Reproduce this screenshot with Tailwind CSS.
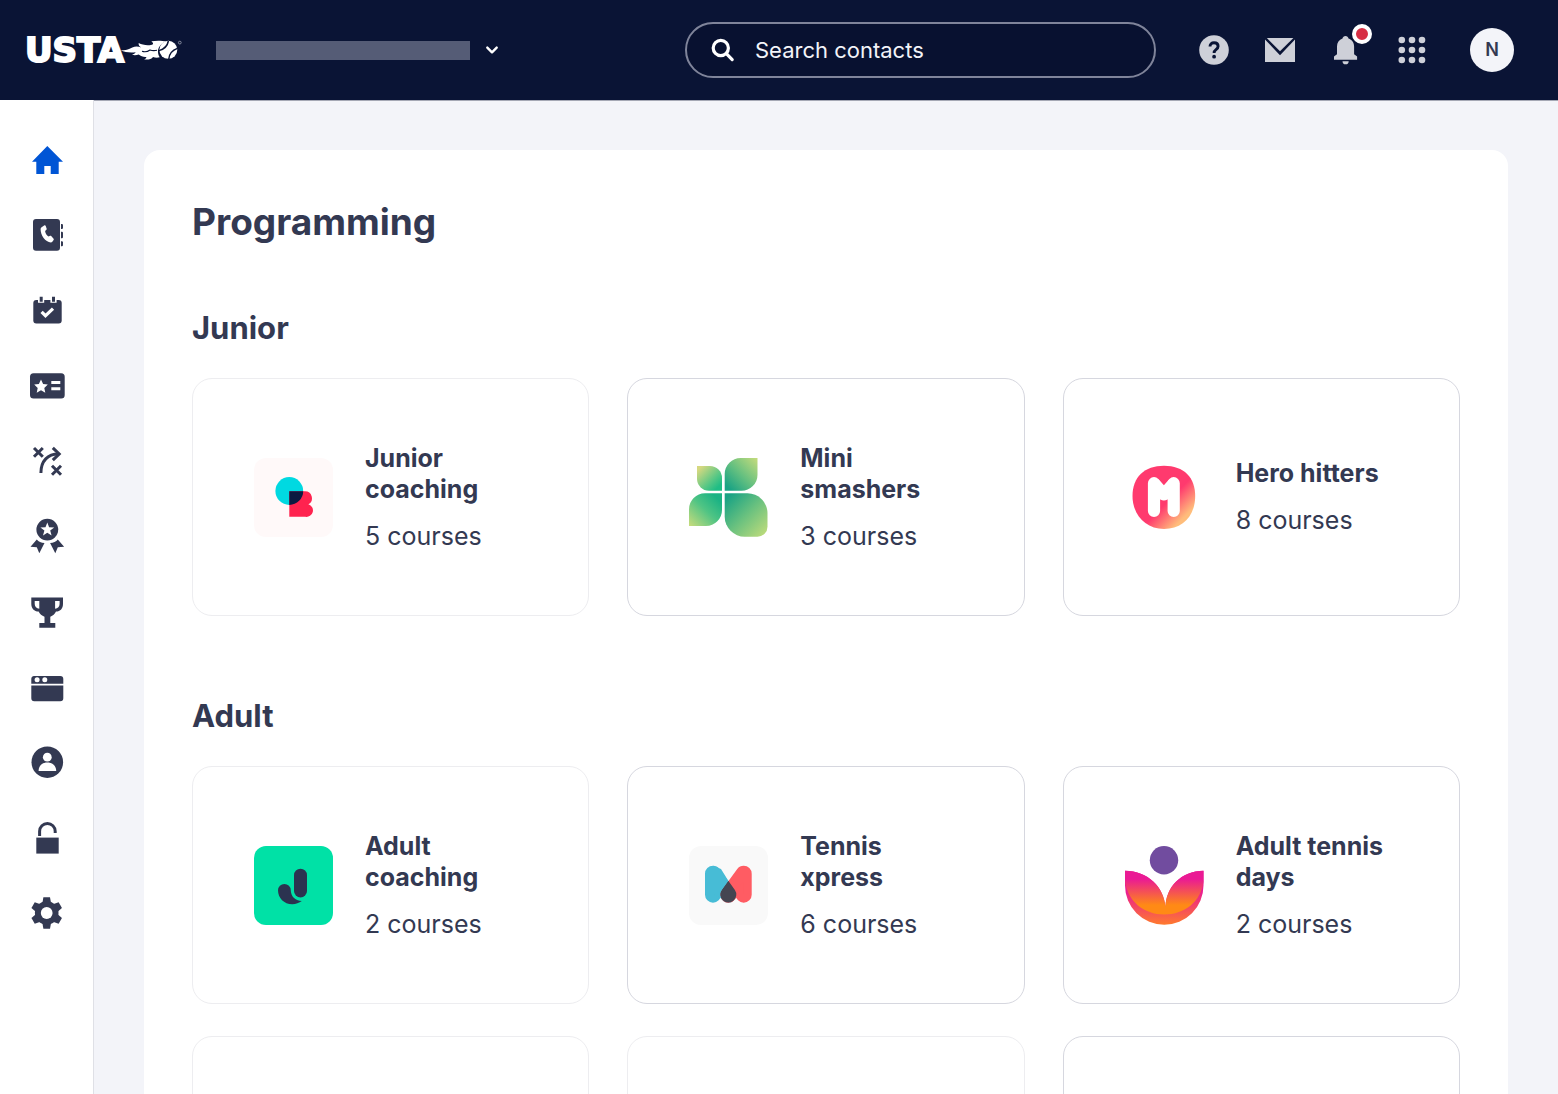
<!DOCTYPE html>
<html lang="en">
  <head>
    <meta charset="UTF-8" />
    <meta name="viewport" content="width=device-width, initial-scale=1.0" />
    <title>Programming</title>
    <script src="https://cdn.jsdelivr.net/npm/@tailwindcss/browser@4"></script>
  </head>
  <body class="flex h-screen flex-col overflow-hidden bg-[#f3f4f9] font-['Inter',sans-serif] text-[#333952]">
    <header class="flex h-[100px] shrink-0 items-center bg-[#0a1435] pr-11 pl-[25px]">
      <a href="#" aria-label="USTA home" class="flex items-center text-white">
        <span class="font-['DejaVu_Sans',sans-serif] text-[34px] leading-10 font-bold [-webkit-text-stroke:2px_white]">USTA</span>
        <svg class="-ml-1 h-[30px] w-[62px]" viewBox="0 0 62 30" fill="currentColor">
          <path d="M.7 15.600C5 15.400 9 14.500 12.300 12.600c3-1.400 6-1.200 9 0-2.200-1.500-3-2.800-2.600-4.600C22 9.800 26 10.600 31 10c2.500-.3 3-1.500.3-3.700C36 5.300 42 5.500 46 6.400 41.500 8 38.500 11.500 38 15.500c-.2 2.500.4 4.800 1.700 6.700-2 .7-4.500.6-6.700-.2-1.500 2.300-5.500 3-9 2.300 1.500-.5 2.300-1.300 2.400-2.400-3 .3-5.500-.6-7.700-2.400-2 .8-4.500 1-6.700.3 1.800-.5 3-1.300 3.700-2.500C10.500 18 5 17.400.7 15.600Z" />
          <path d="M22 16.300c3 1 5.500.6 8-1.300 2 .7 4.500.8 7 .3" fill="none" stroke="#0a1435" stroke-width="1.100" />
          <circle cx="48.300" cy="14.800" r="9" />
          <path d="M39 15.600c5-1.400 8.500-4.800 9.400-9.600M48.800 24c.4-4.800 3.600-8.800 8.600-10.600" fill="none" stroke="#0a1435" stroke-width="1.500" />
          <circle cx="59.800" cy="7.600" r="1.400" fill="none" stroke="#9da1b3" stroke-width=".8" />
        </svg>
      </a>
      <button type="button" aria-label="Switch organisation" class="ml-[34px] flex items-center gap-[15px] text-white">
        <span class="h-[19px] w-[254px] bg-[#555c76]"></span>
        <svg class="size-[14px]" viewBox="0 0 14 14" fill="none" stroke="currentColor" stroke-width="2.400" stroke-linecap="round" stroke-linejoin="round">
          <path d="M2.300 4.600 7 9.300l4.700-4.700" />
        </svg>
      </button>

      <label class="ml-auto flex h-14 w-[471px] items-center gap-5 rounded-full border-2 border-[#7f849a] bg-[#081130] px-6">
        <svg class="size-6 shrink-0 text-white" viewBox="0 0 24 24" fill="none" stroke="currentColor" stroke-width="3.200" stroke-linecap="round">
          <circle cx="9.800" cy="10" r="7.600" />
          <path d="m15.600 15.800 5.600 5.800" />
        </svg>
        <input type="text" aria-label="Search contacts" placeholder="Search contacts" class="min-w-0 flex-1 bg-transparent text-[22px] text-white outline-none placeholder:text-[#f3f4f9]" />
      </label>

      <div class="ml-[43px] flex items-center gap-9 text-[#ced0d8]">
        <button type="button" aria-label="Help" class="size-[30px]">
          <svg class="size-[30px]" viewBox="0 0 30 30">
            <circle cx="15" cy="15" r="14.800" fill="currentColor" />
            <path d="M11 11.600c0-2.400 1.700-3.900 4-3.900 2.400 0 4.100 1.400 4.100 3.600 0 1.600-.9 2.500-2.100 3.400-1.300 1-1.900 1.600-1.900 3.300" fill="none" stroke="#0a1435" stroke-width="2.900" />
            <circle cx="15.100" cy="21.700" r="1.900" fill="#0a1435" />
          </svg>
        </button>
        <button type="button" aria-label="Messages" class="size-[30px]">
          <svg class="size-[30px]" viewBox="0 0 30 30" fill="currentColor">
            <path d="M1.800 3h26.600L15 16.200Z" />
            <path d="M0 4.500 15 20.300 30 4.500V27H0Z" />
          </svg>
        </button>
        <button type="button" aria-label="Notifications" class="relative size-[30px]">
          <svg class="size-[30px]" viewBox="0 0 30 30" fill="currentColor">
            <path d="M14.500 1c1.600 0 2.700 1 3 2.500 3.500 1.200 5.600 4.200 5.600 8v7.700l3 2.300v3.200H3v-3.200l3-2.300v-7.700c0-3.800 2-6.800 5.500-8C11.800 2 12.900 1 14.500 1Z" />
            <path d="M11.500 26.200h6.200a3.100 3.100 0 0 1-6.200 0Z" />
          </svg>
          <span class="absolute -top-[11px] left-[21px] size-5 rounded-full border-4 border-white bg-[#d72e43]"></span>
        </button>
        <button type="button" aria-label="Apps" class="size-[30px]">
          <svg class="size-[30px]" viewBox="0 0 30 30" fill="currentColor">
            <circle cx="4.800" cy="5" r="3.300" /><circle cx="15" cy="5" r="3.300" /><circle cx="25" cy="5" r="3.300" />
            <circle cx="4.800" cy="15" r="3.300" /><circle cx="15" cy="15" r="3.300" /><circle cx="25" cy="15" r="3.300" />
            <circle cx="4.800" cy="25" r="3.300" /><circle cx="15" cy="25" r="3.300" /><circle cx="25" cy="25" r="3.300" />
          </svg>
        </button>
      </div>
      <button type="button" aria-label="Account" class="ml-[43px] size-11 rounded-full bg-[#f3f4f9] text-lg font-semibold text-[#333952]">N</button>
    </header>

    <div class="flex min-h-0 flex-1">
      <nav aria-label="Main" class="w-[94px] shrink-0 border-r border-[#dfe0e6] bg-white pt-[42px]">
        <ul class="flex h-[789px] flex-col items-center justify-between">
          <li>
            <a href="#" aria-label="Home" aria-current="page" class="block text-[#0055d5]">
              <svg class="size-9" viewBox="0 0 36 36" fill="currentColor">
                <path d="M18.300 4 34 19.700h-4.300V32h-8v-8h-6.400v8h-8V19.700H3Z" />
              </svg>
            </a>
          </li>
          <li>
            <a href="#" aria-label="Contacts" class="block">
              <svg class="size-9" viewBox="0 0 36 36" fill="currentColor">
                <rect x="4" y="2" width="27" height="31.700" rx="3" />
                <path d="M32 7h1.200l.8.8v3.400l-.8.800H32ZM32 14.700h1.200l.8.8v5l-.8.800H32ZM32 24.200h1.200l.8.8v3.500l-.8.800H32Z" />
                <path d="m12.600 10.200 2.900-1.900c.5-.3.900-.1 1.100.4l1.100 3.100c.1.400 0 .7-.3 1l-1.300 1.100c.3 2.300 1.500 4.200 3.400 5.600l1.700-.7c.4-.1.700 0 1 .3l2.400 2.700c.3.400.3.800 0 1.200l-1.500 2c-.3.300-.7.500-1.200.5-5.600-.2-10.400-7.200-10.300-13.400 0-.8.400-1.500 1-1.900Z" fill="#fff" />
              </svg>
            </a>
          </li>
          <li>
            <a href="#" aria-label="Bookings" class="block">
              <svg class="size-9" viewBox="0 0 36 36" fill="currentColor">
                <rect x="4.300" y="7" width="28.400" height="23.400" rx="3" />
                <path d="M9 6h6.200v3.800H9ZM21.400 6h6.200v3.800h-6.200Z" fill="#fff" />
                <path d="M10.700 3.700h3v5h-3ZM23 3.700h3v5h-3Z" />
                <path d="m12.600 18.800 3.900 3.900 7.500-7" fill="none" stroke="#fff" stroke-width="3.200" />
              </svg>
            </a>
          </li>
          <li>
            <a href="#" aria-label="Memberships" class="block">
              <svg class="size-9" viewBox="0 0 36 36" fill="currentColor">
                <rect x="1" y="5.300" width="34.700" height="25.200" rx="3.500" />
                <path d="m12 11.500 2.100 4.500 4.700.5-3.500 3.400 1 4.800-4.300-2.500-4.300 2.500 1-4.800-3.500-3.400 4.700-.5ZM22.300 13h9v3h-9ZM22.300 19.300h9v3h-9Z" fill="#fff" />
              </svg>
            </a>
          </li>
          <li>
            <a href="#" aria-label="Coaching" class="block">
              <svg class="size-9" viewBox="0 0 36 36" fill="none" stroke="currentColor" stroke-width="3">
                <path d="m5 5 8.800 8.800m0-8.800L5 13.800M23 22.800l9 9m0-9-9 9" />
                <path d="M11.900 30C11.900 17.600 19 11 29.500 11" />
                <path d="m23.800 4.800 6.400 6.200-6.400 6.200" />
              </svg>
            </a>
          </li>
          <li>
            <a href="#" aria-label="Rankings" class="block">
              <svg class="size-9" viewBox="0 0 36 36" fill="currentColor">
                <circle cx="18.300" cy="11.600" r="10.900" />
                <path d="m18.300 4.400 1.800 4.900 5.100.1-4 3.200 1.400 5-4.300-2.900-4.300 2.900 1.400-5-4-3.200 5.100-.1Z" fill="#fff" />
                <path d="M7.800 21.600c1.700 2.300 4.400 3.400 7.700 3.500L10.300 35.300l-2.500-6.100-6.300-.4ZM28.800 21.600c-1.700 2.300-4.400 3.400-7.700 3.500l5.200 10.200 2.500-6.100 6.300-.4Z" />
              </svg>
            </a>
          </li>
          <li>
            <a href="#" aria-label="Competitions" class="block">
              <svg class="size-9" viewBox="0 0 36 36" fill="currentColor">
                <path fill-rule="evenodd" d="M2.300 3.400H34V10c0 4.500-2.600 7.500-7 7.600-1.300 2.500-3 4.200-5.700 5.200v6.300h5v4.600h-16v-4.600h5.200v-6.300c-2.700-1-4.600-2.700-5.900-5.200C5.200 17.500 2.300 14.500 2.300 10ZM5.700 7V10c0 2.400 1.800 4.400 4.600 4.800V7ZM26.100 7v7.800c2.700-.4 4.500-2.400 4.500-4.800V7Z" />
              </svg>
            </a>
          </li>
          <li>
            <a href="#" aria-label="Website" class="block">
              <svg class="size-9" viewBox="0 0 36 36" fill="currentColor">
                <path d="M5 7h26.300a3 3 0 0 1 3 3v4.700h-32V10A3 3 0 0 1 5 7ZM2.300 16.400h32v12.800a3 3 0 0 1-3 3H5.300a3 3 0 0 1-3-3Z" />
                <circle cx="8.100" cy="10.800" r="2.500" fill="#fff" />
                <circle cx="15.800" cy="10.800" r="2.500" fill="#fff" />
              </svg>
            </a>
          </li>
          <li>
            <a href="#" aria-label="Profile" class="block">
              <svg class="size-9" viewBox="0 0 36 36" fill="currentColor">
                <circle cx="18.300" cy="18.200" r="15.800" />
                <circle cx="18.300" cy="13.200" r="4.400" fill="#fff" />
                <path d="M9.600 26.900c0-5.300 3.600-8.500 8.700-8.500s8.900 3.200 8.900 8.500Z" fill="#fff" />
              </svg>
            </a>
          </li>
          <li>
            <a href="#" aria-label="Access" class="block">
              <svg class="size-9" viewBox="0 0 36 36" fill="currentColor">
                <path d="M7.300 17.600h22.400v16H7.300Z" />
                <path d="M10.600 16v-4.700a7.800 7.800 0 0 1 15.600 0v1.600" fill="none" stroke="currentColor" stroke-width="3" />
              </svg>
            </a>
          </li>
          <li>
            <a href="#" aria-label="Settings" class="block">
              <svg class="size-9" viewBox="0 0 36 36" fill="currentColor">
                <path d="M14.400 2.300h6.600l1.200 6.700v18L21 33.700h-6.600L13.200 27V9Z" />
                <path d="M14.400 2.300h6.600l1.200 6.700v18L21 33.700h-6.600L13.200 27V9Z" transform="rotate(60 17.700 18)" />
                <path d="M14.400 2.300h6.600l1.200 6.700v18L21 33.700h-6.600L13.200 27V9Z" transform="rotate(120 17.700 18)" />
                <circle cx="17.700" cy="18" r="11.800" />
                <circle cx="17.700" cy="18" r="5.900" fill="#fff" />
              </svg>
            </a>
          </li>
        </ul>
      </nav>

      <main class="min-w-0 flex-1 overflow-y-auto border-t border-[#a5a8b5] px-[50px] pt-[49px] [scrollbar-width:none]">
        <div class="rounded-2xl bg-white p-12">
          <h1 class="text-[37px] leading-12 font-bold">Programming</h1>

          <section class="mt-[62px]">
            <h2 class="text-[31px] leading-10 font-bold">Junior</h2>
            <div class="mt-[30px] grid grid-cols-3 gap-x-[38px] gap-y-8">
              <a href="#" class="flex h-[238px] items-center gap-8 rounded-[20px] border border-[#ededf0] px-[61px]">
                <svg class="size-[79px] shrink-0" viewBox="0 0 79 79">
                  <defs>
                    <clipPath id="ball"><circle cx="35.300" cy="33" r="13.900" /></clipPath>
                  </defs>
                  <rect width="79" height="79" rx="12" fill="#fff9f9" />
                  <circle cx="35.300" cy="33" r="13.900" fill="#00d9e1" />
                  <path d="M35.300 33.300h15.500a6.900 6.900 0 0 1 3.600 12.900 6.500 6.500 0 0 1-3.100 12.600h-16Z" fill="#ff234f" />
                  <path d="M35.300 33.300h16v26h-16Z" fill="#0b1a41" clip-path="url(#ball)" />
                </svg>
                <div class="text-[25px] leading-[31px]">
                  <h3 class="font-bold">Junior coaching</h3>
                  <p class="mt-4">5 courses</p>
                </div>
              </a>
              <a href="#" class="flex h-[238px] items-center gap-8 rounded-[20px] border border-[#d6d7df] px-[61px]">
                <svg class="size-[79px] shrink-0" viewBox="0 0 79 79">
                  <defs>
                    <linearGradient id="leaf1" x1="0" y1="0" x2="1" y2="1"><stop offset=".1" stop-color="#d5d880" /><stop offset=".6" stop-color="#56c785" /><stop offset=".85" stop-color="#1fbd85" /></linearGradient>
                    <linearGradient id="leaf2" x1="1" y1="0" x2="0" y2="1"><stop offset="0" stop-color="#c6dc7c" /><stop offset=".5" stop-color="#65c080" /><stop offset=".9" stop-color="#1aa384" /></linearGradient>
                    <linearGradient id="leaf3" x1="0" y1="1" x2="1" y2="0"><stop offset="0" stop-color="#c9dc7c" /><stop offset=".5" stop-color="#4fc484" /><stop offset=".85" stop-color="#1bb384" /></linearGradient>
                    <linearGradient id="leaf4" x1="0" y1="0" x2="1" y2="1"><stop offset=".08" stop-color="#1aa384" /><stop offset=".5" stop-color="#69c17f" /><stop offset=".95" stop-color="#bcdb7b" /></linearGradient>
                  </defs>
                  <path d="M8 8h13a12 12 0 0 1 12 12v12.700H20a12 12 0 0 1-12-12Z" fill="url(#leaf1)" />
                  <path d="M68.500 0v16.700a16 16 0 0 1-16 16H35.700V16a16 16 0 0 1 16-16Z" fill="url(#leaf2)" />
                  <path d="M0 68V51.300a16 16 0 0 1 16-16h17V52a16 16 0 0 1-16 16Z" fill="url(#leaf3)" />
                  <path d="M35.700 35.300H58.500a20 20 0 0 1 20 20v13.400a10 10 0 0 1-10 10H55.700a20 20 0 0 1-20-20Z" fill="url(#leaf4)" />
                </svg>
                <div class="text-[25px] leading-[31px]">
                  <h3 class="font-bold">Mini smashers</h3>
                  <p class="mt-4">3 courses</p>
                </div>
              </a>
              <a href="#" class="flex h-[238px] items-center gap-8 rounded-[20px] border border-[#d6d7df] px-[61px]">
                <svg class="size-[79px] shrink-0" viewBox="0 0 79 79">
                  <defs>
                    <linearGradient id="hero" x1=".1" y1=".1" x2=".9" y2=".9"><stop offset=".58" stop-color="#ff3a6e" /><stop offset=".9" stop-color="#ffbd7b" /></linearGradient>
                  </defs>
                  <path d="M39 7.700C59 7.700 70.200 19.500 70.200 38 70.200 57.500 58 71 39 71 20 71 7.500 56 7.500 38 7.500 19 19.500 7.700 39 7.700Z" fill="url(#hero)" />
                  <path d="M29 25.200v27.700M48.700 25.200v27.700" stroke="#fff" stroke-width="12.200" stroke-linecap="round" />
                  <path d="m33.400 21 5.500 6.200 5.500-6.200L50 36l-7.500 5.500q-3.600 1.800-7.200 0L29 36Z" fill="#fff" />
                </svg>
                <div class="text-[25px] leading-[31px]">
                  <h3 class="font-bold">Hero hitters</h3>
                  <p class="mt-4">8 courses</p>
                </div>
              </a>
            </div>
          </section>

          <section class="mt-20">
            <h2 class="text-[31px] leading-10 font-bold">Adult</h2>
            <div class="mt-[30px] grid grid-cols-3 gap-x-[38px] gap-y-8">
              <a href="#" class="flex h-[238px] items-center gap-8 rounded-[20px] border border-[#ededf0] px-[61px]">
                <svg class="size-[79px] shrink-0" viewBox="0 0 79 79">
                  <rect width="79" height="79" rx="12" fill="#00e1a6" />
                  <rect x="40" y="22.700" width="13" height="28.800" rx="6.500" fill="#2b3350" />
                  <path d="M24 44.300a6.400 6.400 0 0 1 12.800 0c0 5.800 4.200 10.500 11 10.800-2.600 2-6 3.200-9.500 3.200C30 58.300 24 52 24 44.300Z" fill="#2b3350" />
                </svg>
                <div class="text-[25px] leading-[31px]">
                  <h3 class="font-bold">Adult coaching</h3>
                  <p class="mt-4">2 courses</p>
                </div>
              </a>
              <a href="#" class="flex h-[238px] items-center gap-8 rounded-[20px] border border-[#d6d7df] px-[61px]">
                <svg class="size-[79px] shrink-0" viewBox="0 0 79 79" stroke-width="16" stroke-linecap="round" stroke-linejoin="round">
                  <rect width="79" height="79" rx="12" fill="#f9f9f9" />
                  <g fill="#47bcd6" stroke="#47bcd6">
                    <path d="M24 48.700v-21l15.300 21" />
                    <path d="M24 36v12h12Z" stroke="none" />
                  </g>
                  <g fill="#ff5c63" stroke="#ff5c63">
                    <path d="M54.700 48.700v-21l-15.300 21" />
                    <path d="M54.700 36v12h-12Z" stroke="none" />
                  </g>
                  <path d="m39.300 34.700 6.600 9.300a8 8 0 1 1-13.200 0Z" fill="#454551" />
                  <path d="m24 19.700 8 3.300 7.300 11.700-6.600 9.300a8 8 0 0 0-.8 8.300L24 48Z" fill="#47bcd6" />
                </svg>
                <div class="text-[25px] leading-[31px]">
                  <h3 class="font-bold">Tennis xpress</h3>
                  <p class="mt-4">6 courses</p>
                </div>
              </a>
              <a href="#" class="flex h-[238px] items-center gap-8 rounded-[20px] border border-[#d6d7df] px-[61px]">
                <svg class="size-[79px] shrink-0" viewBox="0 0 79 79">
                  <defs>
                    <linearGradient id="bowl" gradientUnits="userSpaceOnUse" x1="0" y1="45" x2="0" y2="79"><stop offset="0" stop-color="#ea1a94" /><stop offset="1" stop-color="#ff7b2c" /></linearGradient>
                    <linearGradient id="petal" gradientUnits="userSpaceOnUse" x1="0" y1="33" x2="0" y2="62"><stop offset="0" stop-color="#ea1a94" /><stop offset=".9" stop-color="#ff8a15" /></linearGradient>
                  </defs>
                  <circle cx="39" cy="14.300" r="14.200" fill="#714c9f" />
                  <path d="M0 24.700C23 25 39 41 40.500 61 41 41 56 25 78.500 24.700V39.500a39.200 39.200 0 0 1-78.500 0Z" fill="url(#bowl)" />
                  <path d="M0 24.700C23 25 39 41 40.500 61 41 41 56 25 78.500 24.700V36C76 55 60 68.500 39.300 68.500S3 55 0 36Z" fill="url(#petal)" />
                </svg>
                <div class="text-[25px] leading-[31px]">
                  <h3 class="font-bold">Adult tennis days</h3>
                  <p class="mt-4">2 courses</p>
                </div>
              </a>
              <div class="h-[238px] rounded-[20px] border border-[#ededf0]"></div>
              <div class="h-[238px] rounded-[20px] border border-[#ededf0]"></div>
              <div class="h-[238px] rounded-[20px] border border-[#d6d7df]"></div>
            </div>
          </section>
        </div>
      </main>
    </div>
  </body>
</html>
